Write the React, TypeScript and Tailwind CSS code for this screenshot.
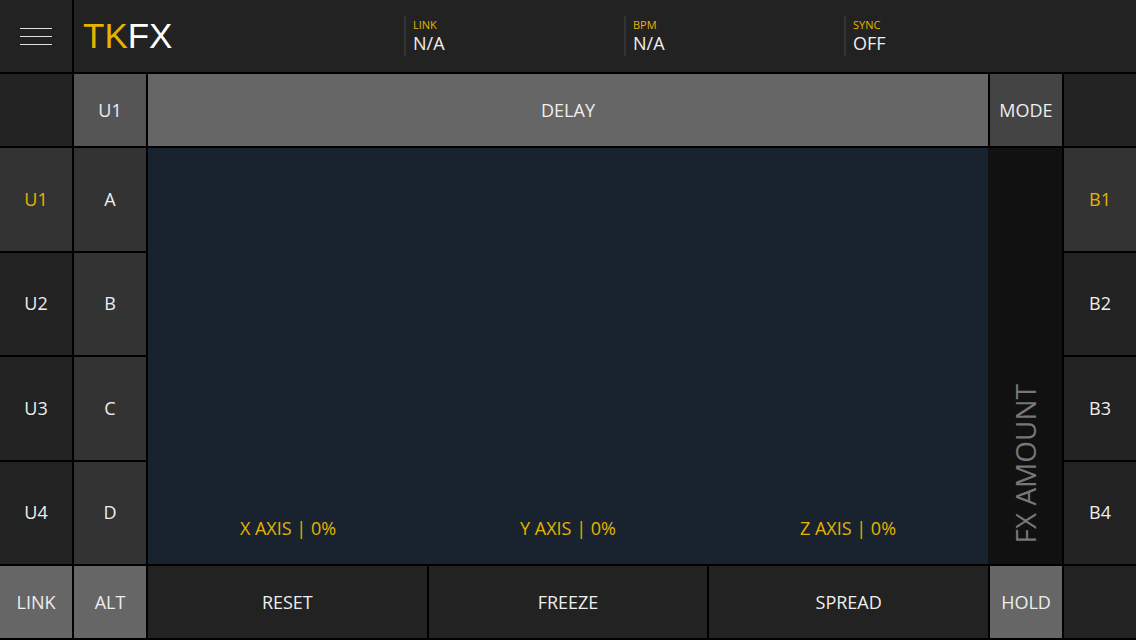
import React from 'react';

const YELLOW = 'text-[#e6b400]';
const ROW_START = ['row-start-3', 'row-start-4', 'row-start-5', 'row-start-6'];

function Cell({
  label,
  className = '',
  active = false,
}: {
  label?: string;
  className?: string;
  active?: boolean;
}) {
  return (
    <div
      className={`flex items-center justify-center text-[18px] ${active ? YELLOW : 'text-[#eeeeee]'} ${className}`}
    >
      {label}
    </div>
  );
}

function Readout({ label, value }: { label: string; value: string }) {
  return (
    <div className="w-[220px] flex items-center">
      <div className="h-[40px] border-l-2 border-[#333333] pl-[7px] flex flex-col justify-center">
        <div className={`text-[11px] leading-[14px] ${YELLOW}`}>{label}</div>
        <div className="text-[18px] leading-[22px] text-[#eeeeee]">{value}</div>
      </div>
    </div>
  );
}

export default function App() {
  const leftRows = ['U1', 'U2', 'U3', 'U4'];
  const letters = ['A', 'B', 'C', 'D'];
  const rightRows = ['B1', 'B2', 'B3', 'B4'];

  return (
    <div
      className="w-[1136px] h-[640px] bg-black grid grid-cols-[72px_72px_840px_72px_72px] grid-rows-[72px_72px_1fr_1fr_1fr_1fr_72px] gap-[2px] pb-[2px] overflow-hidden"
      style={{ fontFamily: '"Open Sans", "Noto Sans", sans-serif' }}
    >
      {/* Header */}
      <div className="row-start-1 col-start-1 bg-[#222222] flex flex-col items-center justify-center gap-[7px]">
        <div className="w-[32px] h-px bg-[#e0e0e0]" />
        <div className="w-[32px] h-px bg-[#e0e0e0]" />
        <div className="w-[32px] h-px bg-[#e0e0e0]" />
      </div>
      <div className="row-start-1 col-start-2 col-span-4 bg-[#222222] flex items-center">
        <div className="w-[330px] pl-[9px]">
          <span
            className="text-[35px] leading-none"
            style={{ fontFamily: '"Liberation Sans", Arial, sans-serif' }}
          >
            <span className={YELLOW}>TK</span>
            <span className="text-white">FX</span>
          </span>
        </div>
        <Readout label="LINK" value="N/A" />
        <Readout label="BPM" value="N/A" />
        <Readout label="SYNC" value="OFF" />
      </div>

      {/* Top control row */}
      <Cell className="row-start-2 col-start-1 bg-[#222222]" />
      <Cell label="U1" className="row-start-2 col-start-2 bg-[#555555]" />
      <Cell label="DELAY" className="row-start-2 col-start-3 bg-[#666666]" />
      <Cell label="MODE" className="row-start-2 col-start-4 bg-[#444444]" />
      <Cell className="row-start-2 col-start-5 bg-[#222222]" />

      {/* Left columns */}
      {leftRows.map((u, i) => (
        <Cell
          key={u}
          label={u}
          active={i === 0}
          className={`col-start-1 ${ROW_START[i]} ${i === 0 ? 'bg-[#333333]' : 'bg-[#222222]'}`}
        />
      ))}
      {letters.map((l, i) => (
        <Cell key={l} label={l} className={`col-start-2 ${ROW_START[i]} bg-[#333333]`} />
      ))}

      {/* XY pad + FX amount */}
      <div className="col-start-3 col-span-2 row-start-3 row-span-4 flex">
        <div className="flex-1 bg-[#19232f] flex flex-col justify-end pb-[24px]">
          <div className={`grid grid-cols-3 text-[18px] leading-[24px] ${YELLOW}`}>
            <div className="text-center">X AXIS | 0%</div>
            <div className="text-center">Y AXIS | 0%</div>
            <div className="text-center">Z AXIS | 0%</div>
          </div>
        </div>
        <div className="w-[74px] bg-[#111111] flex items-end justify-center pb-[21px]">
          <div className="[writing-mode:vertical-rl] rotate-180 text-[28px] leading-none text-[#777777] whitespace-nowrap">
            FX AMOUNT
          </div>
        </div>
      </div>

      {/* Right column */}
      {rightRows.map((b, i) => (
        <Cell
          key={b}
          label={b}
          active={i === 0}
          className={`col-start-5 ${ROW_START[i]} ${i === 0 ? 'bg-[#333333]' : 'bg-[#222222]'}`}
        />
      ))}

      {/* Bottom row */}
      <Cell label="LINK" className="row-start-7 col-start-1 bg-[#666666]" />
      <Cell label="ALT" className="row-start-7 col-start-2 bg-[#666666]" />
      <div className="row-start-7 col-start-3 grid grid-cols-3 gap-[2px]">
        <Cell label="RESET" className="bg-[#222222]" />
        <Cell label="FREEZE" className="bg-[#222222]" />
        <Cell label="SPREAD" className="bg-[#222222]" />
      </div>
      <Cell label="HOLD" className="row-start-7 col-start-4 bg-[#666666]" />
      <Cell className="row-start-7 col-start-5 bg-[#222222]" />
    </div>
  );
}
